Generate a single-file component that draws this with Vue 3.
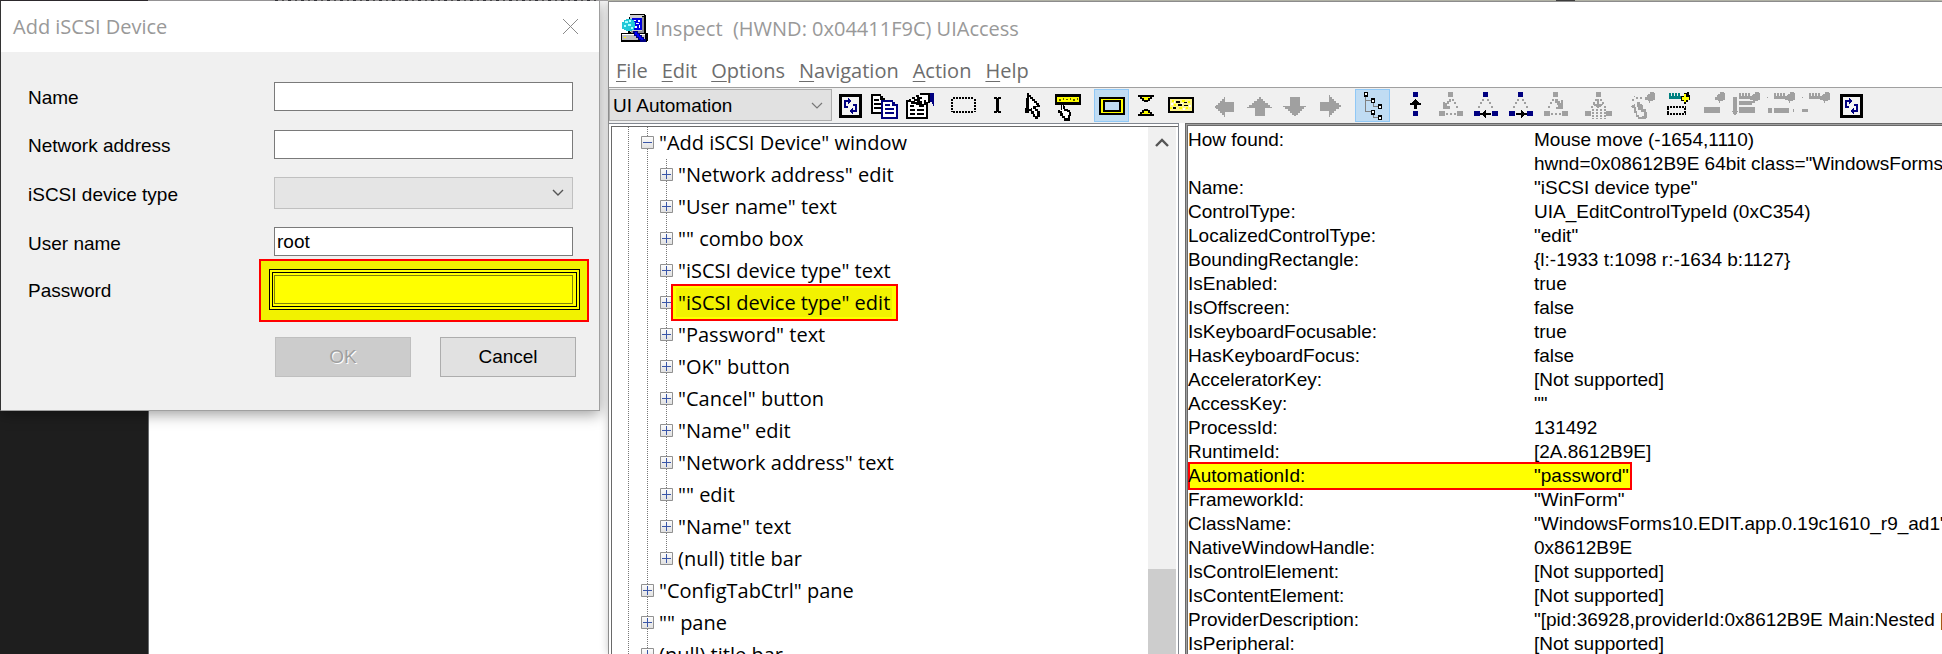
<script setup>
import { ref } from 'vue'

const userName = ref('root')

const K = '#000'
const N = '#000080'
const G = '#a0a0a0'
const Y = '#ffff00'
const W = '#fff'
const D = '#808080'

const refresh = [
  { d: 'M6 5h23v24h-23z', f: K },
  { d: 'M9 8h17v18h-17z', f: '#f4f4f4' },
  { d: 'M11 11h4v-2h1v1h1v1h1v2h-1v1h-1v1h-1v-2h-2v4h2v2h-4z', f: N },
  { d: 'M24 23h-4v2h-1v-1h-1v-1h-1v-2h1v-1h1v-1h1v2h2v-4h-2v-2h4z', f: N }
]
const blob = 'M24 5h2v-2h4v1h1v7h-2v1h-3v2h-1v-2h-1v-1h-3v-3h2v-2h1z'
const ruler = 'M10 4h2v3h1v-3h2v3h1v-3h2v3h1v-3h2v3h2v3h-13z'
const sidesL = 'M14 10h2v2h-2zM12 13h2v2h-2zM10 17h2v2h-2z'
const sidesR = 'M19 10h2v2h-2zM21 13h2v2h-2zM23 17h2v2h-2z'
const three = 'M15 3h5v5h-5zM6 22h6v5h-6zM24 22h6v5h-6z'
const dots = 'M13 24h2v2h-2zM17 24h2v2h-2zM21 24h2v2h-2z'
const arrowL = 'M12 24h3v-1h1v-1h1v-1h1v3h5v2h-5v3h-1v-1h-1v-1h-1v-1h-3z'
const arrowR = 'M24 24h-3v-1h-1v-1h-1v-1h-1v3h-5v2h5v3h1v-1h1v-1h1v-1h3z'
const hand = 'M10 14h3v3h1v3h3v1h2v2h1v4h-1v5h-6v-3h-2v-2h-2v-3h-2v-3h3z'
const handIn = 'M11 16h1v4h1v2h3v1h2v3h-1v3h-3v-2h-2v-3h-1v-2h-2v-1h2z'

const groups = [
  [
    { name: 'Refresh', shapes: refresh },
    { name: 'Copy', shapes: [
      { d: 'M3 5h10v2h2v2h2v16h-14z', f: K }, { d: 'M5 7h7v4h3v12h-10z', f: W },
      { d: 'M6 10h5v2h-5zM6 14h7v2h-7zM6 18h7v2h-7z', f: K },
      { d: 'M13 11h12v2h2v2h3v15h-17z', f: N }, { d: 'M15 13h9v4h4v11h-13z', f: W },
      { d: 'M17 15h5v2h-5zM17 19h9v2h-9zM17 23h9v2h-9z', f: N }
    ] },
    { name: 'Properties', shapes: [
      { d: 'M3 11h22v19h-22z', f: K }, { d: 'M5 13h18v15h-18z', f: W },
      { d: 'M7 20h5v2h-5zM14 20h7v2h-7zM7 24h5v2h-5zM14 24h7v2h-7zM7 16h4v2h-4z', f: K },
      { d: 'M6 10h3v-2h4v-2h4v-2h10v10h-3v2h-3v2h-5v-2h-3v-1h-5v-2h-2z', f: K },
      { d: 'M8 10h3v2h-3zM12 8h2v2h-2zM16 6h9v7h-2v-2h-2v4h-2v-3h-2v-2h2v-2h-3zM12 12h2v1h-2z', f: W },
      { d: 'M27 4h4v13h-1v-2h-1v-2h-2z', f: N }
    ] }
  ],
  [
    { name: 'Show highlight', shapes: [{ d: 'M7 9H28M7 23H28M6 10V23M29 10V23', s: K, w: 2, dash: '2 1' }] },
    { name: 'Show caret', shapes: [{ d: 'M13 8h3v1h1v-1h3v2h-2v12h2v2h-3v-1h-1v1h-3v-2h2v-12h-2z', f: K }] },
    { name: 'Watch cursor', shapes: [
      { d: 'M11 4h2v2h2v2h2v2h2v2h2v2h2v2h1v2h-4v2h2v2h2v6h-2v2h-3v-2h-2v-3h-2v-3h-2v2h-4z', f: K },
      { d: 'M13 8h1v2h2v2h2v2h2v2h1v1h-4v3h2v2h2v5h-2v-2h-1v-3h-2v-3h-1v1h-2z', f: W }
    ] },
    { name: 'Watch tooltips', shapes: [
      { d: 'M4 5h26v11h-26z', f: K },
      { d: 'M6 8h22v5h-22z', f: Y },
      { d: 'M8 10h2v2h-2zM12 9h1v2h-1zM15 10h2v1h-2zM19 9h1v2h-1zM22 10h2v2h-2zM26 9h1v2h-1z', f: '#605c00' },
      { d: hand, f: K }, { d: handIn, f: W }
    ] }
  ],
  [
    { name: 'Highlight rectangle', on: true, shapes: [
      { d: 'M5 8h26v18h-26z', f: K }, { d: 'M7 10h22v14h-22z', f: Y },
      { d: 'M9 11h18v12h-18z', f: K }, { d: 'M11 13h14v8h-14z', f: '#c0dcf3' }
    ] },
    { name: 'Caret triangles', shapes: [
      { d: 'M9 6h16v2h-2v2h-2v2h-2v1h-4v-1h-2v-2h-2v-2h-2zM9 27h16v-2h-2v-2h-2v-2h-2v-1h-4v1h-2v2h-2v2h-2z', f: K },
      { d: 'M13 8h8v1h-2v2h-4v-2h-2zM13 25h8v-1h-2v-2h-4v2h-2z', f: Y }
    ] },
    { name: 'Highlight tooltip', shapes: [
      { d: 'M4 8h26v16h-26z', f: K }, { d: 'M6 10h22v12h-22z', f: '#fff68a' },
      { d: 'M8 11h2v2h-2zM18 11h3v2h-3zM24 12h2v2h-2zM10 15h2v2h-2zM15 18h3v2h-3zM22 18h2v2h-2zM6 18h2v2h-2z', f: Y },
      { d: 'M12 12h4v2h-4zM20 13h3v1h-3zM9 18h3v2h-3zM14 15h4v2h-4zM20 16h4v1h-4z', f: K },
      { d: 'M10 12h1v2h-1zM17 14h2v1h-2zM25 16h2v2h-2zM7 14h2v2h-2zM19 19h2v2h-2z', f: W }
    ] }
  ],
  [
    { name: 'Parent left', off: true, shapes: [{ d: 'M8 17h1v-1h2v-2h2v-2h2v-2h2v-2h1v5h9v10h-9v5h-1v-2h-2v-2h-2v-2h-2v-2h-2v-1h-1z', f: G }] },
    { name: 'Parent', off: true, shapes: [{ d: 'M17 8h2v2h2v2h2v2h3v2h2v2h2v1h-7v8h-10v-8h-8v-1h2v-2h3v-2h2v-2h3v-2h2z', f: G }] },
    { name: 'First child', off: true, shapes: [{ d: 'M13 8h10v9h6v1h-2v2h-2v2h-2v2h-2v2h-2v1h-2v-1h-2v-2h-2v-2h-2v-2h-3v-2h-2v-1h7z', f: G }] },
    { name: 'Next sibling', off: true, shapes: [{ d: 'M8 13h9v-7h1v2h2v2h2v2h2v2h3v2h2v2h-2v2h-3v2h-2v2h-2v2h-2v2h-1v-6h-9z', f: G }] }
  ],
  [
    { name: 'Show tree', on: true, shapes: [
      { d: 'M10 7h1v15h5v1h-6zM11 11h5v1h-5zM18 13h1v4h4v1h-5zM18 25h1v3h4v1h-5z', f: D },
      { d: 'M9 3h4v5h-4zM16 9h4v5h-4zM23 15h4v5h-4zM16 21h4v5h-4zM23 26h4v5h-4z', f: K },
      { d: 'M10 4h2v2h-2zM17 11h2v2h-2zM24 17h2v2h-2zM17 22h2v2h-2zM24 28h2v2h-2z', f: W }
    ] }
  ],
  [
    { name: 'Navigate to parent', shapes: [
      { d: 'M15 3h5v5h-5zM15 22h5v5h-5z', f: N },
      { d: 'M17 10h1v1h1v1h1v1h1v1h2v2h-4v4h-3v-4h-4v-2h2v-1h1v-1h1v-1h1z', f: K }
    ] },
    { name: 'Navigate to first child', off: true, shapes: [
      { d: three, f: G }, { d: dots + 'M19 10h2v2h-2zM21 13h2v2h-2zM23 17h2v2h-2z', f: G },
      { d: 'M16 10h2v3h-2v2h-2v2h3v3h-7v-7h2v1h2v-2h2z', f: G }
    ] },
    { name: 'Navigate to previous sibling', shapes: [{ d: three, f: N }, { d: sidesL + sidesR, f: G }, { d: arrowL, f: K }] },
    { name: 'Navigate to next sibling', shapes: [{ d: three, f: N }, { d: sidesL + sidesR, f: G }, { d: arrowR, f: K }] },
    { name: 'Navigate to last child', off: true, shapes: [
      { d: three, f: G }, { d: dots + sidesL, f: G },
      { d: 'M17 10h3v2h2v2h1v-3h2v9h-7v-2h2v-2h-1v-2h-2z', f: G }
    ] }
  ],
  [
    { name: 'Navigate to ancestor', off: true, shapes: [
      { d: 'M15 3h5v5h-5zM4 22h6v5h-6zM25 22h6v5h-6z', f: G }, { d: sidesL + sidesR, f: G },
      { d: 'M16 10h2v5h4v1h-1v1h-1v1h-2v1h-2v-1h-1v-1h-2v-1h-1v-1h4z', f: G },
      { d: 'M12 20V30M16 20V30M20 20V30M24 20V30', s: G, w: 2, dash: '2 1' }
    ] }
  ],
  [
    { name: 'Invoke action', off: true, shapes: [
      { d: blob, f: G },
      { d: 'M8 10h2v2h-2zM12 8h2v2h-2zM16 8h2v2h-2zM10 7h1v1h-1zM8 16h2v-1h3v-2h3v2h2v1h1v4h3v3h1v6h-1v1h-8v-2h-2v-4h-2v-5h-2v-1h-2z', f: G },
      { d: 'M11 15h2v3h1v3h3v2h3v4h-2v1h-3v-2h-2v-4h-1v-4h-1z', f: '#f0f0f0' }
    ] },
    { name: 'Focus action', shapes: [
      { d: ruler, f: '#008080' },
      { d: 'M25 4h3v-1h2v3h1v5h-2v2h-2v2h-2v-3h-3v-5h3z', f: K },
      { d: 'M25 5h2v3h3v3h-3v2h-2v-2h-2v-3h2z', f: Y },
      { d: 'M8 18H27M8 25H27M9 19V25M26 19V25', s: K, w: 2, dash: '2 1' }
    ] },
    { name: 'Select', off: true, shapes: [{ d: blob, f: G }, { d: 'M10 18h16v6h-16z', f: G }] },
    { name: 'Extend selection', off: true, shapes: [
      { d: blob + ruler + 'M10 12h16v2h-3v2h-13zM10 18h16v6h-16zM4 8h4v14h1v1h-1v2h-1v1h-2v-1h-1v-2h-1v-1h1z', f: G }
    ] },
    { name: 'Add to selection', off: true, shapes: [
      { d: blob + ruler + 'M10 19h15v5h-15zM4 19h4v5h-4zM3 8h1v1h-1zM29 20h1v3h-1z', f: G }
    ] },
    { name: 'Remove from selection', off: true, shapes: [{ d: blob + ruler + 'M3 20h6v3h-6zM3 8h1v1h-1z', f: G }] },
    { name: 'Refresh view', shapes: refresh }
  ]
]

const menus = ['File', 'Edit', 'Options', 'Navigation', 'Action', 'Help']

const tree = [
  { t: '"Add iSCSI Device" window', l: 1, open: true },
  { t: '"Network address" edit', l: 2 },
  { t: '"User name" text', l: 2 },
  { t: '"" combo box', l: 2 },
  { t: '"iSCSI device type" text', l: 2 },
  { t: '"iSCSI device type" edit', l: 2, hit: true },
  { t: '"Password" text', l: 2 },
  { t: '"OK" button', l: 2 },
  { t: '"Cancel" button', l: 2 },
  { t: '"Name" edit', l: 2 },
  { t: '"Network address" text', l: 2 },
  { t: '"" edit', l: 2 },
  { t: '"Name" text', l: 2 },
  { t: '(null) title bar', l: 2, last: true },
  { t: '"ConfigTabCtrl" pane', l: 1 },
  { t: '"" pane', l: 1 },
  { t: '(null) title bar', l: 1 }
]

const props = [
  ['How found:', 'Mouse move (-1654,1110)'],
  ['', 'hwnd=0x08612B9E 64bit class="WindowsForms'],
  ['Name:', '"iSCSI device type"'],
  ['ControlType:', 'UIA_EditControlTypeId (0xC354)'],
  ['LocalizedControlType:', '"edit"'],
  ['BoundingRectangle:', '{l:-1933 t:1098 r:-1634 b:1127}'],
  ['IsEnabled:', 'true'],
  ['IsOffscreen:', 'false'],
  ['IsKeyboardFocusable:', 'true'],
  ['HasKeyboardFocus:', 'false'],
  ['AcceleratorKey:', '[Not supported]'],
  ['AccessKey:', '""'],
  ['ProcessId:', '131492'],
  ['RuntimeId:', '[2A.8612B9E]'],
  ['AutomationId:', '"password"'],
  ['FrameworkId:', '"WinForm"'],
  ['ClassName:', '"WindowsForms10.EDIT.app.0.19c1610_r9_ad1"'],
  ['NativeWindowHandle:', '0x8612B9E'],
  ['IsControlElement:', '[Not supported]'],
  ['IsContentElement:', '[Not supported]'],
  ['ProviderDescription:', '"[pid:36928,providerId:0x8612B9E Main:Nested ['],
  ['IsPeripheral:', '[Not supported]']
]
</script>

<template>
  <div class="desktop">
    <div class="left">
      <section class="dialog" aria-label="Add iSCSI Device">
        <header class="dialog-title">
          <span>Add iSCSI Device</span>
          <button type="button" class="close" aria-label="Close">
            <svg width="17" height="17" viewBox="0 0 17 17"><path d="M1 1L16 16M16 1L1 16" fill="none" stroke="#8a8a8a" /></svg>
          </button>
        </header>
        <form class="form" @submit.prevent>
          <label for="f-name">Name</label>
          <input id="f-name" type="text">
          <label for="f-addr">Network address</label>
          <input id="f-addr" type="text">
          <label for="f-type">iSCSI device type</label>
          <div class="select-wrap">
            <select id="f-type" disabled><option></option></select>
            <svg class="chev" width="12" height="8" viewBox="0 0 12 8"><path d="M1 1L6 6L11 1" fill="none" stroke="#555" stroke-width="1.4" /></svg>
          </div>
          <label for="f-user">User name</label>
          <input id="f-user" v-model="userName" type="text">
          <label for="f-pass">Password</label>
          <div class="pass">
            <i class="mark"></i>
            <i class="frame-outer"></i>
            <i class="frame-inner"></i>
            <input id="f-pass" type="password">
          </div>
          <div class="actions">
            <button type="submit" disabled>OK</button>
            <button type="button">Cancel</button>
          </div>
        </form>
      </section>
    </div>

    <section class="inspect" aria-label="Inspect">
      <header class="title">
        <svg width="28" height="28" viewBox="0 0 28 28" shape-rendering="crispEdges">
          <path d="M9 0h15v1h1v18h2v8h-1v1h-26v-9h7v-13h1z" fill="#000" />
          <path d="M9 1h14v1h-2v16h-12z" fill="#d0d0d0" />
          <path d="M21 3h2v16h-13v-2h11z" fill="#909090" />
          <path d="M11 4h10v12h-10z" fill="#0000e0" />
          <path d="M13 6h2v1h-2zM17 6h2v2h-2zM15 9h3v1h-3zM14 12h2v2h-2zM18 11h1v3h-1z" fill="#fff" />
          <path d="M1 20h23v6h-23z" fill="#c0c0c0" />
          <path d="M1 20h23v1h-23z" fill="#fff" />
          <path d="M3 23h2v1h-2z" fill="#ffff00" />
          <path d="M3 6h2v-1h6v1h2v2h1v6h-1v2h-2v1h-6v-1h-2v-1h-2v-7h2z" fill="#20c8d8" />
          <path d="M4 7h3v2h-3zM8 6h2v2h-2zM3 11h2v2h-2zM7 10h3v2h-3zM10 13h2v2h-2z" fill="#a8ffff" />
          <path d="M12 17h5v2h2v2h2v2h2v2h2v3h-6v-2h-2v-2h-2v-2h-2v-3h-1z" fill="#000080" />
          <path d="M14 18h2v2h2v2h2v2h2v2h-2v-1h-2v-2h-2v-2h-2z" fill="#0000ff" />
        </svg>
        <span>Inspect&nbsp; (HWND: 0x04411F9C) UIAccess</span>
      </header>
      <nav class="menu">
        <button v-for="m in menus" :key="m" type="button"><u>{{ m[0] }}</u>{{ m.slice(1) }}</button>
      </nav>
      <div class="toolbar">
        <div class="mode">
          <select aria-label="Mode"><option>UI Automation</option></select>
          <svg class="chev" width="12" height="8" viewBox="0 0 12 8"><path d="M1 1L6 6L11 1" fill="none" stroke="#777" stroke-width="1.2" /></svg>
        </div>
        <div v-for="(g, gi) in groups" :key="gi" class="group">
          <button v-for="b in g" :key="b.name" type="button" class="tool" :class="{ on: b.on }" :disabled="b.off" :aria-label="b.name">
            <svg width="35" height="33" viewBox="0 0 35 33" shape-rendering="crispEdges">
              <path v-for="(s, i) in b.shapes" :key="i" :d="s.d" :fill="s.f || 'none'" :stroke="s.s" :stroke-width="s.w" :stroke-dasharray="s.dash" />
            </svg>
          </button>
        </div>
      </div>
      <div class="panes">
        <div class="tree-pane">
          <ul class="tree">
            <li v-for="(n, i) in tree" :key="i">
              <span v-for="c in n.l" :key="c" class="guide"></span>
              <span class="guide node" :class="{ last: n.last }">
                <button type="button" :aria-label="n.open ? 'Collapse' : 'Expand'">
                  <svg width="13" height="13" viewBox="0 0 13 13" shape-rendering="crispEdges">
                    <path :d="n.open ? 'M2 6h9v1h-9z' : 'M2 6h9v1h-9zM6 2h1v9h-1z'" fill="#3a56a8" />
                  </svg>
                </button>
              </span>
              <span class="node-text" :class="{ hit: n.hit }">{{ n.t }}</span>
            </li>
          </ul>
          <div class="scroll">
            <svg width="14" height="10" viewBox="0 0 14 10"><path d="M1 8L7 2L13 8" fill="none" stroke="#555" stroke-width="2.4" /></svg>
            <i class="thumb"></i>
          </div>
        </div>
        <div class="prop-pane">
          <table>
            <tbody>
              <tr v-for="(p, i) in props" :key="i">
                <th scope="row" :class="{ marked: i === 14 }">{{ p[0] }}</th>
                <td><span :class="{ marked: i === 14 }">{{ p[1] }}</span></td>
              </tr>
            </tbody>
          </table>
        </div>
      </div>
    </section>
  </div>
</template>

<style>
body {
  overflow: hidden;
}
</style>

<style scoped>
* {
  box-sizing: border-box;
}

button,
input,
select {
  font: inherit;
  color: inherit;
  border-radius: 0;
  margin: 0;
}

.desktop {
  display: grid;
  grid-template-columns: 608px minmax(0, 1fr);
  height: 100vh;
  padding-top: 1px;
  overflow: hidden;
  font-family: "Liberation Sans", Arial, sans-serif;
  font-size: 19px;
  color: #000;
  background:
    repeating-linear-gradient(90deg, #3a3a40 0 3px, #aaa8aa 3px 7px, #555 7px 9px, #aaa8aa 9px 13px) 275px 0 / 325px 1px no-repeat,
    linear-gradient(90deg, #332f33 0 148px, #aaa8aa 148px 608px, #c4c5b6 608px 1556px, #444 1556px 1575px, #c4c5b6 1575px) 0 0 / 100% 1px no-repeat,
    #fff;
}

.left {
  background: linear-gradient(90deg, #1e1e1e 0 148px, #6a6d70 148px 149px, #fff 149px);
}

.dialog {
  width: 600px;
  height: 410px;
  background: #f0f0f0;
  border: 1px solid #a0a0a0;
  border-left-color: #333;
  border-top: 0;
  box-shadow: 0 3px 14px rgba(0, 0, 0, 0.4);
}

.dialog-title {
  display: flex;
  align-items: center;
  justify-content: space-between;
  height: 51px;
  padding: 0 20px 0 12px;
  background: #fff;
  color: #999;
  font-family: "Open Sans", "Noto Sans", sans-serif;
  font-size: 20px;
}

.close {
  display: flex;
  padding: 0;
  border: 0;
  background: none;
}

.form {
  display: grid;
  grid-template-columns: 246px 299px;
  grid-template-rows: 48px 48px 50px 47px 48px;
  align-items: center;
  padding: 20px 0 0 27px;
}

.form label {
  padding-top: 4px;
}

.form input {
  width: 100%;
  height: 29px;
  padding: 0 2px;
  border: 1px solid #7a7a7a;
  background: #fff;
}

.select-wrap,
.mode {
  position: relative;
  display: flex;
}

.select-wrap select {
  width: 100%;
  height: 32px;
  appearance: none;
  border: 1px solid #adadad;
  background: #e1e1e1;
}

.chev {
  position: absolute;
  right: 9px;
  top: 50%;
  margin-top: -4px;
  pointer-events: none;
}

.pass {
  position: relative;
  height: 29px;
}

.pass i {
  position: absolute;
}

.pass .mark {
  inset: -16px -16px -18px -15px;
  border: 2px solid #f00;
  background: #f2f200;
}

.frame-outer {
  inset: -6px -7px -6px -5px;
  border: 1px solid #000;
  background: #ff0;
}

.frame-inner {
  inset: -3px -4px -3px -2px;
  border: 1px solid #000;
}

.pass input {
  position: relative;
  display: block;
  border-color: #80800a;
  background: #ff0;
}

.actions {
  grid-column: 2 / -1;
  display: flex;
  justify-content: space-between;
  width: 301px;
  margin: 24px 0 0 1px;
}

.actions button {
  width: 136px;
  height: 40px;
  border: 1px solid #adadad;
  background: #e1e1e1;
}

.actions button:disabled {
  border-color: #bfbfbf;
  background: #ccc;
  color: #a0a0a0;
  text-shadow: 1px 1px 0 #fff;
}

.inspect {
  position: relative;
  display: flex;
  flex-direction: column;
  min-width: 0;
  min-height: 0;
  border-top: 1px solid #8c8c8c;
  border-left: 1px solid #8c8c8c;
  background: #fff;
  box-shadow: 0 0 8px rgba(0, 0, 0, 0.22);
}

.title {
  display: flex;
  align-items: center;
  gap: 6px;
  height: 52px;
  padding: 0 12px;
  color: #999;
  font-family: "Open Sans", "Noto Sans", sans-serif;
  font-size: 20px;
  white-space: nowrap;
}

.menu {
  display: flex;
  gap: 14px;
  height: 33px;
  padding-left: 7px;
  font-family: "Open Sans", "Noto Sans", sans-serif;
  font-size: 20px;
  color: #6d6d6d;
}

.menu button {
  padding: 0;
  border: 0;
  background: none;
}

.menu u {
  text-decoration-thickness: 1px;
  text-underline-offset: 3px;
}

.toolbar {
  display: flex;
  flex-shrink: 0;
  height: 36px;
  padding-top: 1px;
  border-top: 1px solid #a0a0a0;
  background: #f0f0f0;
}

.mode {
  margin-right: 1px;
}

.mode select {
  width: 223px;
  height: 32px;
  padding: 0 3px;
  appearance: none;
  border: 1px solid #adadad;
  background: #e1e1e1;
}

.group {
  display: flex;
  margin-right: 8px;
}

.tool {
  width: 35px;
  height: 33px;
  padding: 0;
  border: 0;
  background: none;
}

.tool svg {
  display: block;
}

.tool.on {
  background: #c0dcf3;
  box-shadow: inset 0 0 0 1px #90c8f6;
}

.panes {
  display: grid;
  grid-template-columns: 570px minmax(0, 1fr);
  column-gap: 6px;
  flex: 1;
  min-height: 0;
  background: #fff;
}

.tree-pane {
  display: flex;
  min-height: 0;
  overflow: hidden;
  border: 1px solid #828790;
  border-width: 1px 1px 0 0;
  box-shadow: inset 2px 2px 0 #fff, inset 3px 3px 0 #696969;
  padding: 3px 2px 0 3px;
}

.tree {
  flex: 1;
  margin: 0;
  padding: 0 0 0 7px;
  list-style: none;
  font-family: "Open Sans", "Noto Sans", sans-serif;
  font-size: 20px;
  line-height: 32px;
  white-space: nowrap;
}

.tree li {
  display: flex;
  height: 32px;
}

.guide {
  flex: none;
  width: 19px;
  background: repeating-linear-gradient(#777 0 1px, transparent 1px 2px) 9px 0 / 1px 100% no-repeat;
}

.guide.last {
  background-size: 1px 50%;
}

.node {
  display: flex;
  align-items: center;
  padding-left: 3px;
}

.node button {
  display: flex;
  width: 13px;
  height: 13px;
  margin-bottom: 2px;
  padding: 0;
  border: 0;
  border-radius: 1px;
  box-shadow: inset 0 0 0 1px #919191;
  background: linear-gradient(#fff, #dedede);
}

.node-text {
  position: relative;
  padding-left: 2px;
}

.node-text.hit {
  z-index: 0;
}

.node-text.hit::before {
  content: "";
  position: absolute;
  z-index: -1;
  inset: -3px -8px -2px -5px;
  border: 2px solid #f00;
  background: #f2f200;
  box-shadow: inset -4px -2px 0 #ff0, inset 3px 2px 0 #ff0;
}

.scroll {
  display: flex;
  flex-direction: column;
  align-items: center;
  width: 28px;
  padding-top: 11px;
  background: #f0f0f0;
}

.scroll svg {
  flex: none;
}

.thumb {
  width: 100%;
  height: 85px;
  margin-top: auto;
  background: #cdcdcd;
}

.prop-pane {
  min-width: 0;
  overflow: hidden;
  padding: 2px 0 0;
  border: 3px double #696969;
  border-width: 3px 0 0 3px;
  background: linear-gradient(#fff, #fff) padding-box, #a0a0a0;
}

.prop-pane table {
  width: 100%;
  table-layout: fixed;
  border-collapse: collapse;
  line-height: 24px;
  white-space: nowrap;
}

.prop-pane th,
.prop-pane td {
  height: 24px;
  padding: 0;
  text-align: left;
  font-weight: 400;
}

.prop-pane th {
  width: 346px;
}

.prop-pane td span {
  display: block;
  width: max-content;
}

.marked {
  background: #ff0;
}

.prop-pane th.marked {
  box-shadow: inset 2px 0 0 #f00, 0 -2px 0 #f00, 0 2px 0 #f00;
}

.prop-pane span.marked {
  padding-right: 3px;
  box-shadow: inset -2px 0 0 #f00, 0 -2px 0 #f00, 0 2px 0 #f00;
}
</style>
